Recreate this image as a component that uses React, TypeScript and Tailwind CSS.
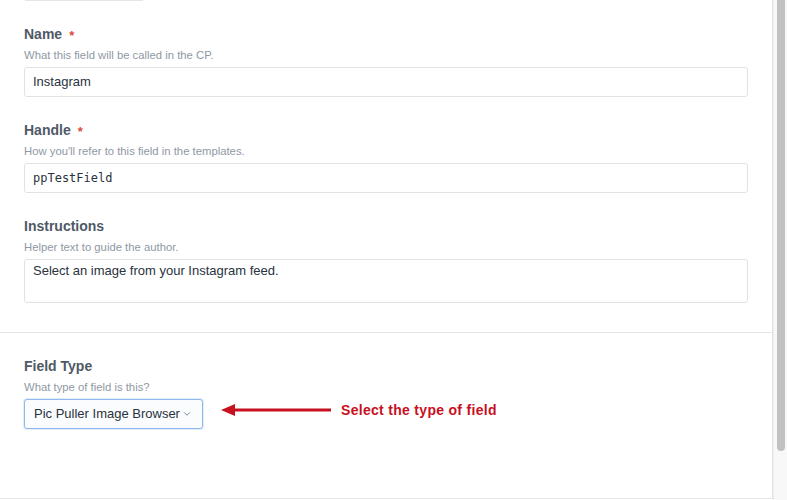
import { ChevronDown } from "lucide-react";

const sans = { fontFamily: '"Liberation Sans", Arial, sans-serif' };

function Field({ label, required, hint, children, first }: { label: string; required?: boolean; hint: string; children: React.ReactNode; first?: boolean }) {
  return (
    <div className={first ? "" : "mt-[23px]"}>
      <div className="flex items-center h-5 text-[14px] font-bold text-[#4f5966]">
        {label}
        {required && <span className="ml-[7px] text-[#d94a3d] text-[13px] font-bold leading-none mt-[3px]">*</span>}
      </div>
      <div className="mt-[3px] h-4 leading-4 text-[11.3px] text-[#8f98a3]">{hint}</div>
      <div className="mt-[4px]">{children}</div>
    </div>
  );
}

export default function App() {
  return (
    <div className="flex h-[500px] w-[787px] bg-white overflow-hidden" style={sans}>
      <div className="w-[773px] h-[499px] border-r border-b border-[#e3e5e8] bg-white flex flex-col">
        {/* tail of the tab above */}
        <div className="ml-[25px] w-[118px] h-px bg-[#e3e5e8]" />

        <div className="px-6 mt-[23px]">
          <Field label="Name" required hint="What this field will be called in the CP." first>
            <div className="h-[30px] rounded-[3px] border border-[#e0e2e6] px-[8px] flex items-center text-[13px] text-[#29323d]">
              Instagram
            </div>
          </Field>
          <Field label="Handle" required hint="How you'll refer to this field in the templates.">
            <div
              className="h-[30px] rounded-[3px] border border-[#e0e2e6] px-[8px] flex items-center text-[12px] text-[#29323d]"
              style={{ fontFamily: '"DejaVu Sans Mono", "Liberation Mono", monospace' }}
            >
              ppTestField
            </div>
          </Field>
          <Field label="Instructions" hint="Helper text to guide the author.">
            <div className="h-[44px] rounded-[3px] border border-[#e0e2e6] px-[8px] pt-[1px] text-[13px] leading-5 text-[#29323d]">
              Select an image from your Instagram feed.
            </div>
          </Field>
        </div>

        <div className="mt-[29px] h-px bg-[#e3e5e8]" />

        <div className="px-6 mt-[23px]">
          <Field label="Field Type" hint="What type of field is this?" first>
            <div className="flex items-center">
              <div className="w-[179px] h-[30px] rounded-[3px] border border-[#8fb8ec] bg-[#fbfcfe] shadow-[0_0_0_1px_rgba(143,184,236,0.25)] pl-[9px] pr-[10px] flex items-center justify-between whitespace-nowrap text-[13px] text-[#29323d]">
                <span>Pic Puller Image Browser</span>
                <ChevronDown size={10} strokeWidth={2} className="text-[#606d7b]" />
              </div>
              <svg width="112" height="14" viewBox="0 0 112 14" className="ml-[18px] mb-[8px]">
                <polygon points="0,7 14,1 14,13" fill="#c8101e" />
                <rect x="12" y="5.5" width="98" height="3" fill="#c8101e" />
              </svg>
              <span className="ml-[8px] mb-[8px] text-[14px] tracking-[0.3px] font-bold text-[#c8101e]">Select the type of field</span>
            </div>
          </Field>
        </div>
      </div>

      <div className="flex-1 h-[500px] bg-[#f8f8f8] border-l border-[#ececec] flex justify-center">
        <div className="w-[8px] h-[451px] bg-[#c1c1c1] rounded-b-[4px]" />
      </div>
    </div>
  );
}
